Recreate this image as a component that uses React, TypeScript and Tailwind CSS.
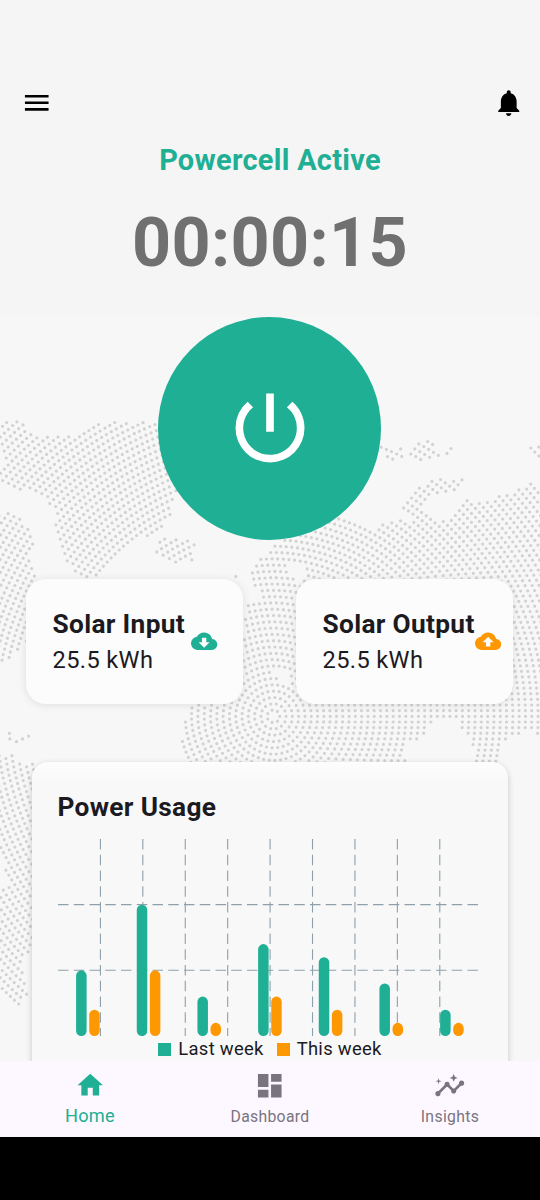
import React from "react";
import {
  MdCloudDownload,
  MdCloudUpload,
  MdDashboard,
  MdHome,
  MdInsights,
  MdMenu,
  MdNotifications,
  MdPowerSettingsNew,
} from "react-icons/md";

type Point = [number, number];

// Land outlines of the dotted polar map, in page pixels.
const LAND: Point[][] = [
  [[0, 420], [12, 421], [29, 423], [27, 433], [42, 436], [75, 435], [84, 426], [92, 422], [118, 422], [150, 421], [175, 424], [178, 494], [168, 520], [166, 524], [153, 534], [135, 541], [118, 552], [106, 564], [94, 578], [80, 577], [64, 562], [58, 542], [53, 528], [57, 518], [46, 500], [37, 491], [14, 491], [0, 479], [0, 474], [10, 462], [0, 453]],
  [[0, 510], [22, 520], [37, 541], [29, 556], [37, 577], [34, 640], [22, 648], [10, 658], [0, 661]],
  [[158, 538], [196, 541], [193, 560], [171, 565], [155, 556]],
  [[231, 571], [237, 571], [237, 577], [231, 577]],
  [[376, 446], [402, 447], [404, 460], [386, 459]],
  [[408, 447], [428, 441], [444, 452], [430, 461], [409, 458]],
  [[446, 447], [453, 447], [453, 454], [446, 454]],
  [[526, 448], [540, 446], [540, 464]],
  [[249, 570], [266, 553], [290, 530], [335, 516], [353, 521], [370, 531], [392, 520], [412, 519], [398, 512], [408, 498], [418, 488], [438, 478], [463, 478], [457, 492], [440, 493], [426, 500], [418, 509], [428, 517], [443, 521], [455, 514], [464, 500], [485, 503], [496, 494], [515, 490], [527, 484], [540, 484], [540, 738], [533, 731], [518, 735], [507, 737], [500, 748], [498, 766], [474, 766], [473, 744], [463, 733], [458, 720], [440, 718], [430, 728], [425, 738], [407, 744], [403, 755], [415, 766], [183, 766], [181, 726], [190, 706], [225, 692], [244, 640], [246, 604], [264, 600], [254, 588]],
  [[0, 730], [10, 732], [15, 738], [29, 736], [25, 743], [8, 742]],
  [[0, 755], [12, 754], [20, 764], [38, 760], [40, 942], [31, 944], [22, 968], [27, 996], [17, 1009], [0, 992], [0, 893], [7, 885], [5, 862], [0, 855]],
];

// Inland water, left without dots.
const WATER: Point[][] = [
  [[284, 566], [300, 564], [306, 572], [304, 582], [296, 580]],
  [[270, 672], [284, 670], [294, 680], [282, 682]],
];

const inside = (x: number, y: number, poly: Point[]) => {
  let hit = false;
  for (let i = 0, j = poly.length - 1; i < poly.length; j = i++) {
    const [xi, yi] = poly[i];
    const [xj, yj] = poly[j];
    if (yi > y !== yj > y && x < ((xj - xi) * (y - yi)) / (yj - yi) + xi) hit = !hit;
  }
  return hit;
};

// Concentric rings of dots round the pole; every ring holds seven more than the last.
const dots = (() => {
  const cx = 273.5;
  const cy = 716.3;
  const out: Point[] = [];
  for (let ring = 1; ring < 72; ring++) {
    const count = ring * 7;
    for (let i = 0; i < count; i++) {
      const a = (i / count) * Math.PI * 2;
      const x = cx + Math.cos(a) * ring * 6.3;
      const y = cy + Math.sin(a) * ring * 6.3;
      if (x < -2 || x > 542 || y < 415 || y > 1015) continue;
      const px = Math.min(539.5, Math.max(0.5, x));
      if (LAND.some((p) => inside(px, y, p)) && !WATER.some((p) => inside(px, y, p))) out.push([x, y]);
    }
  }
  return out;
})();

const dotPath = dots.map(([x, y]) => `M${x.toFixed(1)} ${y.toFixed(1)}h0`).join("");

function DottedMap() {
  return (
    <svg className="pointer-events-none absolute inset-0" width="540" height="1061" viewBox="0 0 540 1061" aria-hidden="true">
      <path d={dotPath} stroke="#d2d2d2" strokeWidth="3.2" strokeLinecap="round" />
    </svg>
  );
}

const TEAL = "#1eaf94";
const ORANGE = "#fd9803";

function SolarCard({ title, value, children }: { title: string; value: string; children: React.ReactNode }) {
  return (
    <div className="flex h-[125px] w-[217px] items-center justify-between rounded-[20px] bg-[#fcfcfc] pl-[26.5px] pr-[25.5px] shadow-[0_1px_8px_rgba(0,0,0,0.1)]">
      <div className="shrink-0 whitespace-nowrap text-[#1b1a1f]">
        <div className="text-[26.25px] font-bold leading-[36px] tracking-[0.33px]">{title}</div>
        <div className="text-[23.6px] leading-[36px] tracking-[0.38px]">{value}</div>
      </div>
      {children}
    </div>
  );
}

const WEEK = [
  [5, 2],
  [10, 5],
  [3, 1],
  [7, 3],
  [6, 2],
  [4, 1],
  [2, 1],
];

function UsageChart() {
  const unit = 13.13;
  return (
    <svg className="block" width="421" height="198" viewBox="0 0 421 198">
      <g stroke="#8da0ac" strokeWidth="1.1" strokeDasharray="10.5 5.25">
        {[1, 2, 3, 4, 5, 6, 7, 8, 9].map((i) => (
          <line key={i} x1={i * 42.42} x2={i * 42.42} y1="0" y2="197" />
        ))}
        <line x1="0" x2="420" y1="65.6" y2="65.6" />
        <line x1="0" x2="420" y1="131.3" y2="131.3" />
      </g>
      {WEEK.map(([last, now], i) => (
        <g key={i}>
          <rect x={18.1 + i * 60.67} y={197 - last * unit} width="10.5" height={last * unit} rx="5.25" fill={TEAL} />
          <rect x={31.2 + i * 60.67} y={197 - now * unit} width="10.5" height={now * unit} rx="5.25" fill={ORANGE} />
        </g>
      ))}
    </svg>
  );
}

export default function App() {
  return (
    <div className="relative flex h-[1200px] w-[540px] flex-col overflow-hidden bg-[#f7f7f7] font-['Roboto',sans-serif]">
      <DottedMap />
      <header className="flex h-[317px] shrink-0 flex-col bg-[#f5f5f5]">
        <div className="mt-[87px] flex justify-between pl-[21px] pr-[16px] text-black">
          <MdMenu size={31.5} />
          <MdNotifications size={31.5} />
        </div>
        <h1 className="mt-[21px] text-center text-[28.9px] font-bold leading-[40px] tracking-[0.3px] text-[#1eaf94]">
          Powercell Active
        </h1>
        <div className="mt-[23px] text-center text-[68.25px] font-bold leading-[80px] tracking-[0.3px] text-[#707070]">00:00:15</div>
      </header>

      <main className="relative flex h-[744px] shrink-0 flex-col items-center overflow-hidden">
        <button className="mr-[0.5px] flex size-[223px] shrink-0 items-center justify-center rounded-full bg-[#1eaf94] pb-[1px] text-white">
          <MdPowerSettingsNew size={92} />
        </button>

        <section className="mr-[1px] mt-[39px] flex gap-[53px]">
          <SolarCard title="Solar Input" value="25.5 kWh">
            <MdCloudDownload className="shrink-0" size={26.25} color={TEAL} />
          </SolarCard>
          <SolarCard title="Solar Output" value="25.5 kWh">
            <MdCloudUpload className="shrink-0" size={26.25} color={ORANGE} />
          </SolarCard>
        </section>

        <section className="mr-[0.5px] mt-[58px] h-[360px] w-[476.5px] shrink-0 rounded-[16px] bg-[linear-gradient(#fdfdfd,#f8f8f8_20px)] pl-[26px] pt-[26px] shadow-[0_2px_6px_rgba(0,0,0,0.2)]">
          <h2 className="h-[51px] text-[26.25px] font-bold leading-[38px] tracking-[0.33px] text-[#1b1a1f]">Power Usage</h2>
          <UsageChart />
          <div className="-mt-[1px] flex w-[425px] items-center justify-center text-[18.4px] leading-[26px] tracking-[0.3px] text-[#1b1a1f]">
            <span className="mr-[7px] size-[13px] bg-[#1eaf94]" />
            <span>Last week</span>
            <span className="ml-[13px] mr-[7px] size-[13px] bg-[#fd9803]" />
            <span>This week</span>
          </div>
        </section>
      </main>

      <nav className="relative grid h-[76px] shrink-0 grid-cols-3 bg-[#fdf7ff] pt-[9px] text-[#79747e]">
        <div className="flex flex-col items-center text-[#1eaf94]">
          <MdHome size={30.5} />
          <span className="mt-[3.5px] text-[18.2px] leading-[24px] tracking-[0.3px]">Home</span>
        </div>
        <div className="flex flex-col items-center">
          <MdDashboard size={31.5} />
          <span className="mt-[4px] text-[15.75px] leading-[22px] tracking-[0.3px]">Dashboard</span>
        </div>
        <div className="flex flex-col items-center">
          <MdInsights size={31.5} />
          <span className="mt-[4px] text-[15.75px] leading-[22px] tracking-[0.35px]">Insights</span>
        </div>
      </nav>
      <div className="relative flex-1 bg-black" />
    </div>
  );
}
